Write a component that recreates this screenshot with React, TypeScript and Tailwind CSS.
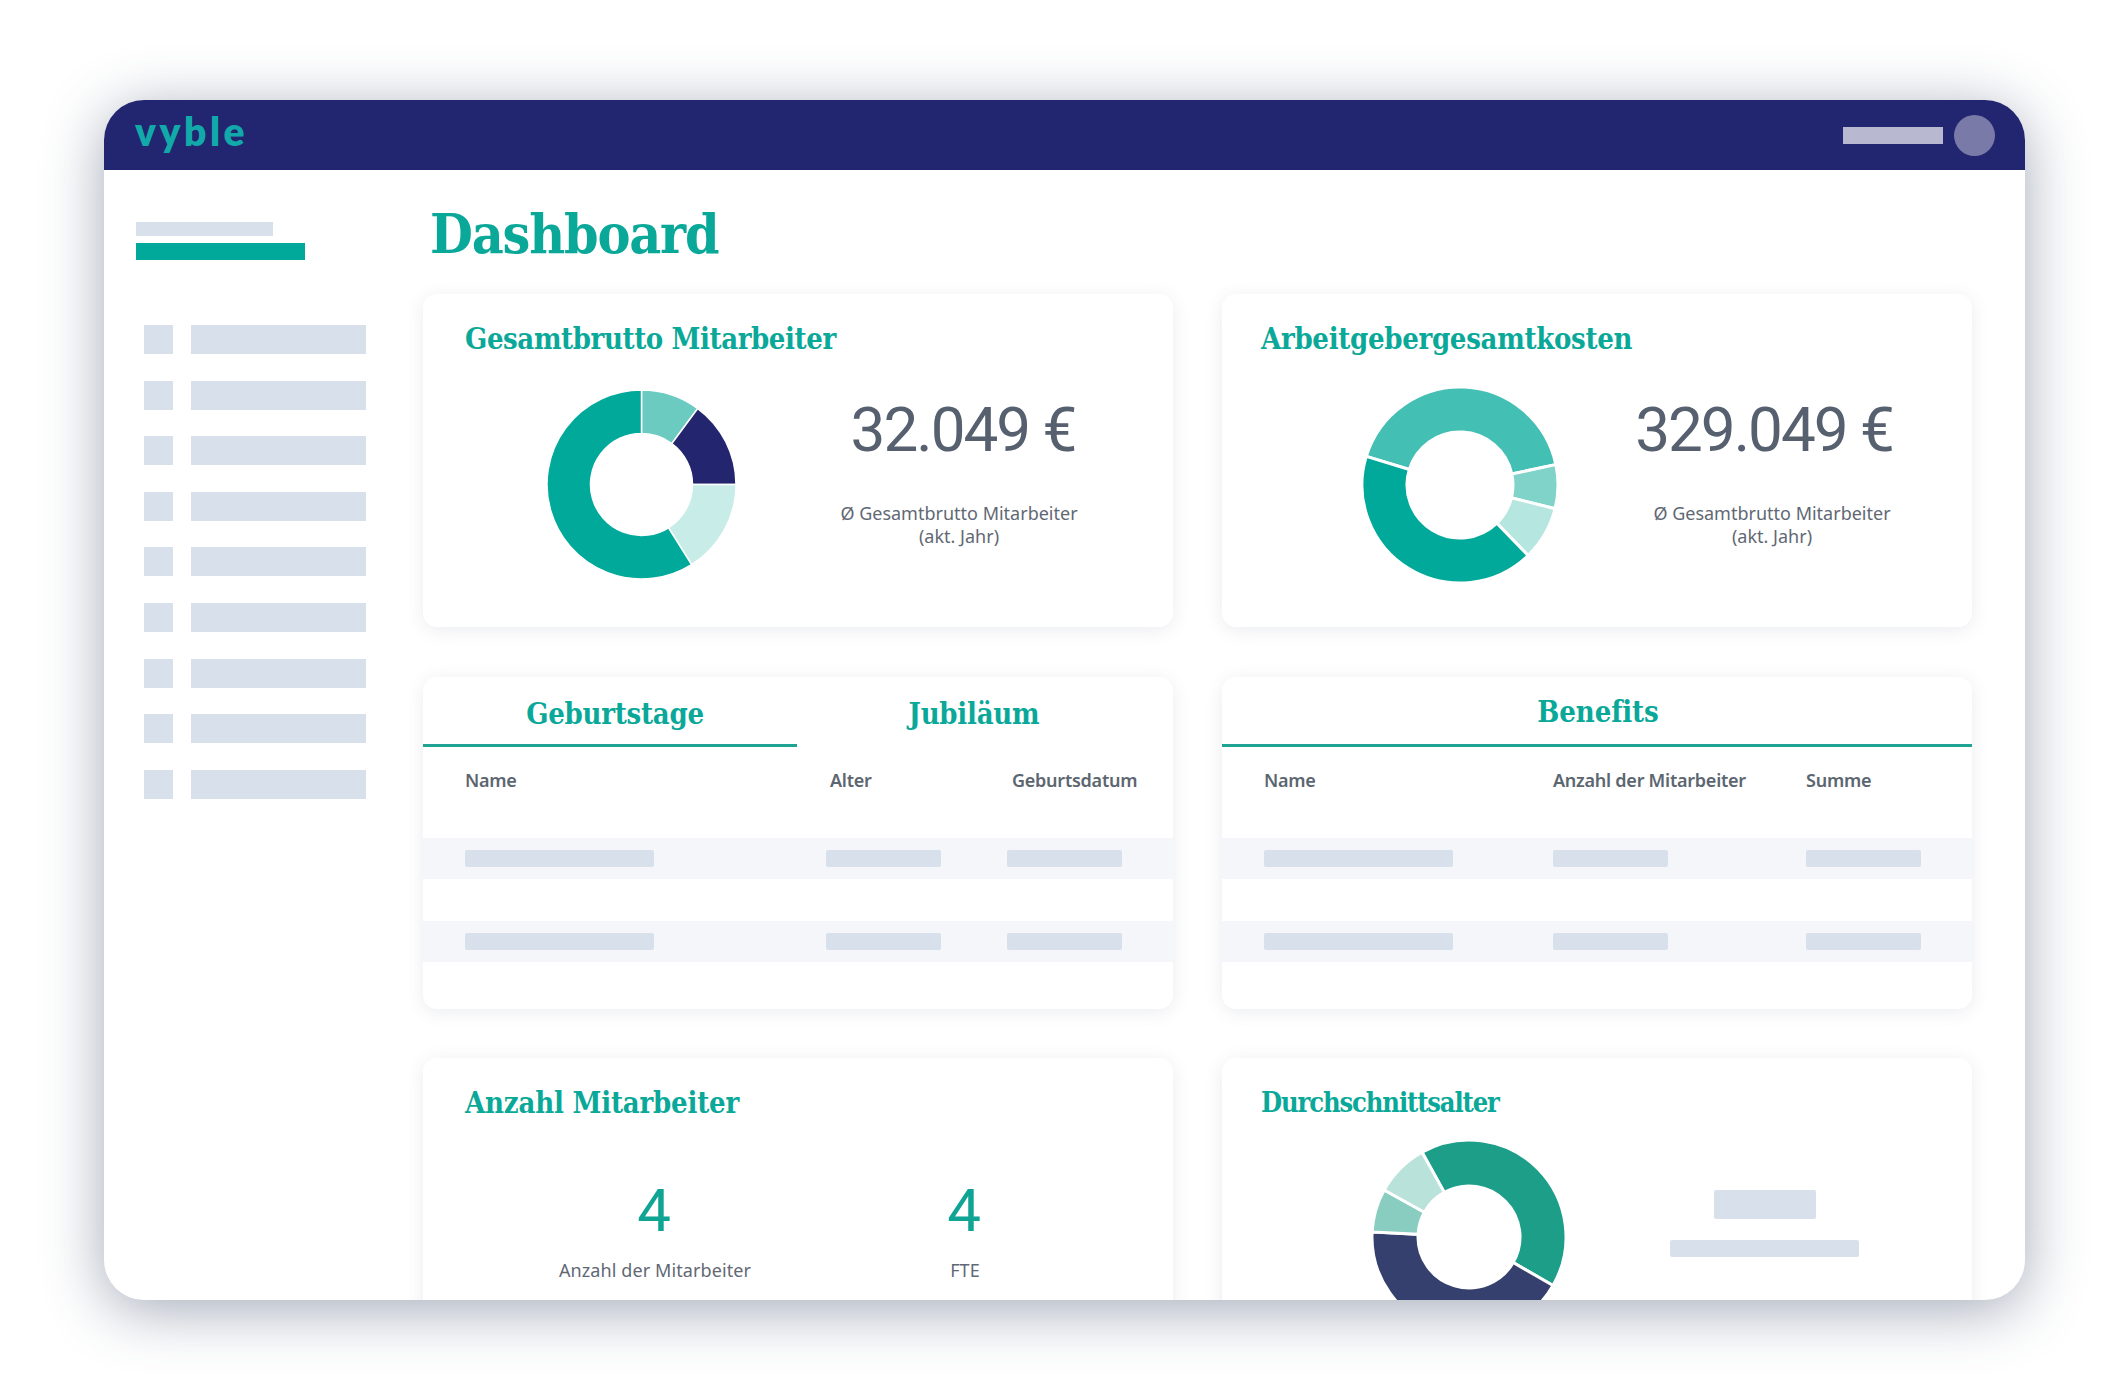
import React from "react";

type Seg = { from: number; to: number; color: string };

function arc(c: number, d: number, R: number, r: number, a0: number, a1: number) {
  const p = (rad: number, a: number) => {
    const t = ((a - 90) * Math.PI) / 180;
    return `${(c + rad * Math.cos(t)).toFixed(2)} ${(d + rad * Math.sin(t)).toFixed(2)}`;
  };
  const large = a1 - a0 > 180 ? 1 : 0;
  return `M${p(R, a0)} A${R} ${R} 0 ${large} 1 ${p(R, a1)} L${p(r, a1)} A${r} ${r} 0 ${large} 0 ${p(r, a0)} Z`;
}

function Donut({ R, r, segs, sep, className }: { R: number; r: number; segs: Seg[]; sep: number; className?: string }) {
  const s = R * 2 + 2;
  return (
    <svg width={s} height={s} viewBox={`0 0 ${s} ${s}`} className={`shrink-0 ${className ?? ""}`}>
      {segs.map((x, i) => (
        <path key={i} d={arc(s / 2, s / 2, R, r, x.from, x.to)} fill={x.color} stroke="#ffffff" strokeWidth={sep} />
      ))}
    </svg>
  );
}

const serif = "font-['DejaVu_Serif_Condensed','DejaVu_Serif',serif]";
const sans = "font-['Noto_Sans',sans-serif]";
const digits = "font-['Roboto',sans-serif]";

function CardTitle({ children, className }: { children: React.ReactNode; className?: string }) {
  return <h2 className={`${serif} font-bold leading-[36px] text-[#0aa899] ${className ?? ""}`}>{children}</h2>;
}

function Card({ children, className }: { children: React.ReactNode; className?: string }) {
  return (
    <section className={`rounded-[14px] bg-white shadow-[0_3px_18px_rgba(70,85,110,0.11)] ${className ?? ""}`}>
      {children}
    </section>
  );
}

function Bar({ w }: { w: string }) {
  return <div className={`h-[17px] rounded-[2px] bg-[#d8e0eb] ${w}`} />;
}

function Stat({ value, valueCls, capCls }: { value: string; valueCls: string; capCls: string }) {
  return (
    <div className={`${sans} text-center`}>
      <div className={`${digits} text-[62px] leading-[70px] font-normal tracking-[-2px] text-[#56606e] ${valueCls}`}>{value}</div>
      <div className={`mt-[37px] text-[18px] leading-[22.5px] text-[#5f6874] ${capCls}`}>
        Ø Gesamtbrutto Mitarbeiter
        <br />
        (akt. Jahr)
      </div>
    </div>
  );
}

function TableBody({ headers, grid, pad, widths }: { headers: { t: string; cls: string }[]; grid: string; pad: string; widths: string[] }) {
  return (
    <div>
      <div className={`grid h-[91px] ${grid} ${pad} pt-[21px] ${sans}`}>
        {headers.map((h) => (
          <div key={h.t} className={`text-[18px] leading-[24px] font-semibold tracking-[-0.25px] text-[#5c6670] ${h.cls}`}>
            {h.t}
          </div>
        ))}
      </div>
      <div className="flex flex-col gap-[42px]">
        {[0, 1].map((i) => (
          <div key={i} className={`grid h-[41px] items-center bg-[#f4f6fa] ${grid} ${pad}`}>
            {widths.map((w, j) => (
              <Bar key={j} w={w} />
            ))}
          </div>
        ))}
      </div>
    </div>
  );
}

const nav = [0, 1, 2, 3, 4, 5, 6, 7, 8];

export default function App() {
  return (
    <div className="h-[1400px] w-[2120px] overflow-hidden bg-white pl-[104px] pt-[100px]">
      <div className="flex h-[1200px] w-[1921px] flex-col overflow-hidden rounded-[40px] bg-white shadow-[0_10px_60px_rgba(55,70,100,0.46)]">
        <header className="flex h-[70px] shrink-0 items-center justify-between bg-[#22256f] pl-[31px] pr-[30px]">
          <div className="mb-[8px] font-['Lato',sans-serif] text-[39px] font-extrabold leading-[40px] tracking-[3.5px] text-[#12a9aa]">vyble</div>
          <div className="flex items-center gap-[11px]">
            <div className="h-[17px] w-[100px] bg-[#b8b8d0]" />
            <div className="h-[41px] w-[41px] rounded-full bg-[#7a7aa9]" />
          </div>
        </header>
        <div className="flex min-h-0 flex-1">
          <aside className="w-[319px] shrink-0 pl-[32px] pt-[52px]">
            <div className="h-[14px] w-[137px] bg-[#d8e0eb]" />
            <div className="mt-[7px] h-[17px] w-[169px] bg-[#00a99a]" />
            <nav className="ml-[8px] mt-[65px] flex flex-col gap-[26.6px]">
              {nav.map((n) => (
                <div key={n} className="flex gap-[18px]">
                  <div className="h-[29px] w-[29px] bg-[#d8e0eb]" />
                  <div className="h-[29px] w-[175px] bg-[#d8e0eb]" />
                </div>
              ))}
            </nav>
          </aside>
          <main className="min-w-0 flex-1">
            <h1 className={`${serif} ml-[7px] mt-[29px] h-[95px] text-[55px] font-bold leading-[70px] tracking-[-1.2px] text-[#0aa899]`}>Dashboard</h1>
            <div className="grid w-[1549px] grid-cols-[750px_750px] grid-rows-[333px_332px_332px] gap-x-[49px] gap-y-[49.5px]">
              <Card>
                <CardTitle className="pl-[42px] pt-[27px] text-[29px] tracking-[-0.4px]">Gesamtbrutto Mitarbeiter</CardTitle>
                <div className="mt-[32px] flex items-start">
                  <Donut
                    className="ml-[123px]"
                    R={94.5}
                    r={51}
                    sep={1.5}
                    segs={[
                      { from: 0, to: 36.5, color: "#6ccbc0" },
                      { from: 36.5, to: 90, color: "#23256f" },
                      { from: 90, to: 148, color: "#c8ece8" },
                      { from: 148, to: 360, color: "#00a99a" },
                    ]}
                  />
                  <div className="ml-[72px] w-[300px] pt-[6px]">
                    <Stat value="32.049 €" valueCls="pl-[8px]" capCls="" />
                  </div>
                </div>
              </Card>
              <Card>
                <CardTitle className="pl-[39px] pt-[27px] text-[29px] tracking-[-0.3px]">Arbeitgebergesamtkosten</CardTitle>
                <div className="mt-[29px] flex items-start">
                  <Donut
                    className="ml-[139px]"
                    R={98}
                    r={53}
                    sep={3}
                    segs={[
                      { from: 287, to: 438, color: "#43bfb3" },
                      { from: 78, to: 104, color: "#7fd3c8" },
                      { from: 104, to: 136, color: "#b5e6e0" },
                      { from: 136, to: 287, color: "#00a99a" },
                    ]}
                  />
                  <div className="ml-[35px] w-[340px] pt-[9px]">
                    <Stat value="329.049 €" valueCls="" capCls="pl-[16px]" />
                  </div>
                </div>
              </Card>
              <Card className="overflow-hidden">
                <div className={`${serif} flex h-[70px] text-[29px] font-bold tracking-[-0.25px] text-[#0aa899]`}>
                  <div className="flex h-[70px] w-[374px] items-center justify-center border-b-[3px] border-[#1fa392] pl-[10px] pt-[10px]">Geburtstage</div>
                  <div className="flex h-[67px] w-[354px] items-center justify-center pt-[10px]">Jubiläum</div>
                </div>
                <TableBody
                  grid="grid-cols-[361px_181px_1fr]"
                  pad="pl-[42px]"
                  headers={[
                    { t: "Name", cls: "" },
                    { t: "Alter", cls: "pl-[4px]" },
                    { t: "Geburtsdatum", cls: "pl-[5px]" },
                  ]}
                  widths={["w-[189px]", "w-[115px]", "w-[115px]"]}
                />
              </Card>
              <Card className="overflow-hidden">
                <div className={`${serif} flex h-[70px] items-center justify-center border-b-[3px] border-[#1fa392] pl-[2px] pt-[5px] text-[29px] font-bold tracking-[-0.1px] text-[#0aa899]`}>Benefits</div>
                <TableBody
                  grid="grid-cols-[289px_253px_1fr]"
                  pad="pl-[42px]"
                  headers={[
                    { t: "Name", cls: "" },
                    { t: "Anzahl der Mitarbeiter", cls: "" },
                    { t: "Summe", cls: "" },
                  ]}
                  widths={["w-[189px]", "w-[115px]", "w-[115px]"]}
                />
              </Card>
              <Card>
                <CardTitle className="pl-[42px] pt-[27px] text-[29px] tracking-[-0.2px]">Anzahl Mitarbeiter</CardTitle>
                <div className={`${sans} mt-[55px] grid grid-cols-[310px_1fr] pl-[76px] text-center`}>
                  {[
                    { v: "4", c: "Anzahl der Mitarbeiter" },
                    { v: "4", c: "FTE" },
                  ].map((s) => (
                    <div key={s.c} className="w-[310px]">
                      <div className={`${digits} text-[60px] leading-[70px] font-normal text-[#0fa494]`}>{s.v}</div>
                      <div className="mt-[12px] pl-[2px] text-[18px] leading-[24px] tracking-[0.1px] text-[#5f6874]">{s.c}</div>
                    </div>
                  ))}
                </div>
              </Card>
              <Card>
                <CardTitle className="pl-[39px] pt-[27px] text-[27px] tracking-[-1.1px]">Durchschnittsalter</CardTitle>
                <div className="mt-[18px] flex items-start">
                  <Donut
                    className="ml-[149px]"
                    R={97}
                    r={51}
                    sep={3}
                    segs={[
                      { from: 331, to: 480, color: "#1d9e88" },
                      { from: 120, to: 273, color: "#36406f" },
                      { from: 273, to: 299, color: "#88cdc0" },
                      { from: 299, to: 331, color: "#b9e2da" },
                    ]}
                  />
                  <div className="ml-[103px] mt-[51px] flex w-[189px] flex-col items-center gap-[21px]">
                    <div className="h-[29px] w-[102px] rounded-[2px] bg-[#d8e0eb]" />
                    <Bar w="w-[189px]" />
                  </div>
                </div>
              </Card>
            </div>
          </main>
        </div>
      </div>
    </div>
  );
}
